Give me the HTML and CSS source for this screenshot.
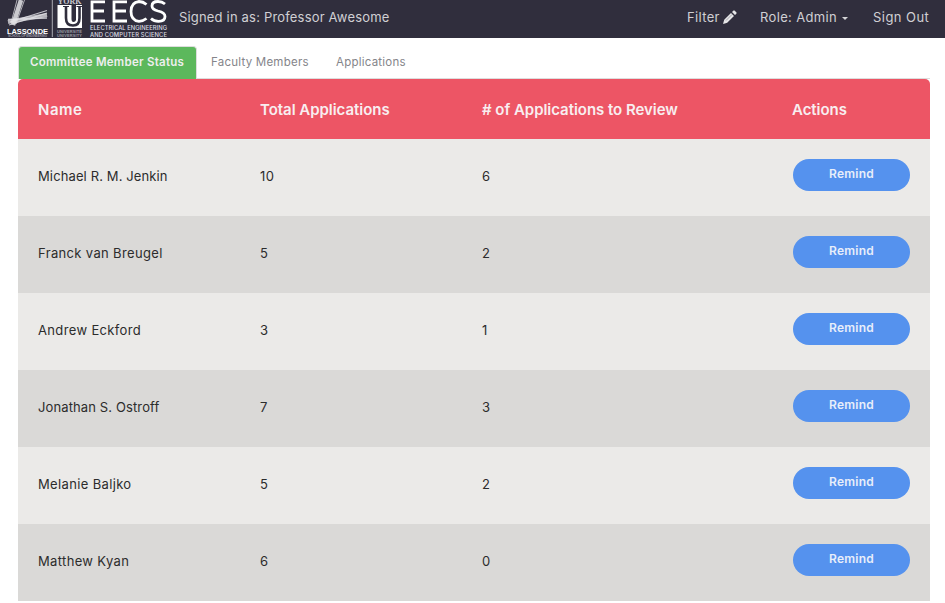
FILE: index.html
```html
<!DOCTYPE html>
<html lang="en">
<head>
<meta charset="utf-8">
<title>Committee Member Status</title>
<link rel="stylesheet" href="styles.css">
</head>
<body>
<header class="navbar">
  <svg class="logo" width="180" height="38" viewBox="0 0 180 38" aria-label="Lassonde York U EECS">
    <g fill="none" stroke="#e4e4e8">
      <path d="M21 0 13 25" stroke-width="4.500" opacity=".85"/>
      <path d="M17 0 11 23M24.500 0 16 24" stroke-width="1" opacity=".7"/>
      <path d="M8 22 24 19 47 15" stroke-width="4" opacity=".75"/>
      <path d="M8 19.500 47 18M9 25 47 13M10 22 47 10.500" stroke-width="1.300" opacity=".8"/>
    </g>
    <text class="logo-bold" x="7" y="33.5" font-size="7.5" textLength="41">LASSONDE</text>
    <text class="logo-faint" x="8" y="37.3" font-size="3.2" textLength="39">SCHOOL OF ENGINEERING</text>
    <path d="M52.300 0V37" stroke="#aaaab2"/>
    <text class="logo-serif" x="57.500" y="3.700" font-size="8" textLength="24">YORK</text>
    <path d="M57.500 5H82V28H57.500z" fill="#fff"/>
    <path d="M66 6V18Q66 25.500 73 25.500 79.500 25.500 79.500 18V6" fill="none" stroke="#302e3d" stroke-width="2.600"/>
    <path d="M63 6.500H69M76.500 6.500H82" stroke="#302e3d" stroke-width="1.200"/>
    <path d="M71.500 5H76V20Q75.500 22 73.500 22 71.500 22 71.500 19z" fill="#302e3d"/>
    <text class="logo-faint" x="57" y="33" font-size="4" textLength="25">UNIVERSITÉ</text>
    <text class="logo-faint" x="57" y="36.800" font-size="4" textLength="25">UNIVERSITY</text>
    <g fill="none" stroke="#fff" stroke-width="2.800">
      <path d="M105 1.800H92V21H105M92 11H104"/>
      <path d="M127 1.800H114V21H127M114 11H126"/>
      <path d="M146.500 4.500Q143 1.500 139 1.500 131 2.500 131 11.500 131 20.500 139 21.300 143 21.300 146.500 18.500"/>
      <path d="M165 4Q162 1.500 158 1.500 152 1.500 152 6 152 9.500 158 11 165 12.500 165 16.500 165 21.300 158.500 21.300 154 21.300 151 18.500"/>
    </g>
    <text class="logo-caps" x="90" y="30" font-size="5.800" textLength="77">ELECTRICAL ENGINEERING</text>
    <text class="logo-caps" x="90" y="36.500" font-size="5.800" textLength="77">AND COMPUTER SCIENCE</text>
  </svg>
  <span class="signed">Signed in as: Professor Awesome</span>
  <nav class="nav-links">
    <a class="filter"><span>Filter</span><svg class="pencil" width="14" height="14" viewBox="0 0 14 14"><path d="M0 14 1.200 9.800 8 3 11 6 4.200 12.800zM9 2 10.300.700Q11 0 11.700.700L13.300 2.300Q14 3 13.300 3.700L12 5z" fill="#e6e6e8"/><path d="M3 10.500 9 4.500" stroke="#77757f" stroke-width=".6"/></svg></a>
    <a class="role"><span>Role: Admin</span><i class="caret"></i></a>
    <a class="signout">Sign Out</a>
  </nav>
</header>
<main class="page">
  <div class="tabs">
    <a class="tab active">Committee Member Status</a>
    <a class="tab faculty">Faculty Members</a>
    <a class="tab apps">Applications</a>
  </div>
  <table class="members">
    <thead><tr><th class="c-name">Name</th><th class="c-total">Total Applications</th><th class="c-review"># of Applications to Review</th><th class="c-actions">Actions</th></tr></thead>
    <tbody>
      <tr><td class="tight">Michael R. M. Jenkin</td><td>10</td><td>6</td><td><button class="remind">Remind</button></td></tr>
      <tr><td>Franck van Breugel</td><td>5</td><td>2</td><td><button class="remind">Remind</button></td></tr>
      <tr><td>Andrew Eckford</td><td>3</td><td>1</td><td><button class="remind">Remind</button></td></tr>
      <tr><td class="tight">Jonathan S. Ostroff</td><td>7</td><td>3</td><td><button class="remind">Remind</button></td></tr>
      <tr><td>Melanie Baljko</td><td>5</td><td>2</td><td><button class="remind">Remind</button></td></tr>
      <tr><td>Matthew Kyan</td><td>6</td><td>0</td><td><button class="remind">Remind</button></td></tr>
    </tbody>
  </table>
</main>
</body>
</html>
```
FILE: styles.css
```css
* { box-sizing: border-box; }
body { margin: 0; background: #fff; font: 13px/18px Inter, "Liberation Sans", sans-serif; color: #2c2c2c; overflow: hidden; }
.navbar { display: flex; height: 38px; background: #302e3d; color: #d0d0d4; padding-right: 15px; letter-spacing: .35px; }
.logo { flex: none; margin-right: -1px; }
.logo text { fill: #fff; letter-spacing: 0; font-family: "Liberation Sans", sans-serif; }
.logo .logo-bold { font-weight: 700; }
.logo .logo-serif { font-family: "Liberation Serif", serif; font-weight: 700; fill: #c8c8ce; }
.logo .logo-faint { fill: #9a9aa4; font-weight: 700; }
.logo .logo-caps { fill: #dcdce2; font-family: Inter, sans-serif; font-weight: 500; }
.signed { padding-top: 8px; white-space: nowrap; letter-spacing: .18px; }
.nav-links { display: flex; margin-left: auto; padding-top: 8px; white-space: nowrap; }
.filter { display: flex; width: 73px; }
.pencil { margin: 2px 0 0 3px; }
.role { display: flex; width: 113px; }
.caret { width: 0; height: 0; margin: 9px 0 0 5px; border: 3.500px solid transparent; border-top-color: #d5d5d8; border-bottom: 0; }
.signout { width: 57px; letter-spacing: .45px; }
.page { padding: 8px 15px 0 18px; }
.tabs { display: flex; height: 33px; border-bottom: 1px solid #ddd; font-size: 11.500px; line-height: 32px; color: #85858a; white-space: nowrap; }
.tab { padding-left: 11px; }
.active { width: 179px; height: 33px; background: #5cb85c; border: 1px solid #ddd; border-bottom: 0; border-radius: 4px 4px 0 0; color: #eee; font-weight: 600; line-height: 31px; letter-spacing: .26px; }
.faculty { width: 125px; padding-left: 14px; letter-spacing: .23px; }
.apps { padding-left: 14px; letter-spacing: .23px; }
.members { width: 912px; border-collapse: separate; border-spacing: 0; table-layout: fixed; }
th { height: 60px; padding: 1px 0 0 20px; background: #ed5565; color: #f8eef0; font-size: 15px; font-weight: 600; text-align: left; white-space: nowrap; letter-spacing: -.04px; }
th:first-child { border-radius: 5px 0 0; }
th:last-child { border-radius: 0 5px 0 0; }
.c-name, .c-total { width: 222px; }
.c-name { letter-spacing: .5px; }
.c-review { width: 310px; }
td { height: 77px; padding: 0 0 4px 20px; background: #ebeae8; letter-spacing: .35px; }
.tight { letter-spacing: .12px; }
tr:nth-child(even) td { background: #dad9d7; }
.remind { display: block; margin: 0 0 2px 1px; width: 117px; height: 32px; padding: 0 0 2px; border: 0; border-radius: 16px; background: #5592ee; color: #e8eefa; font: 600 12px/18px Inter, sans-serif; letter-spacing: .25px; }
```
